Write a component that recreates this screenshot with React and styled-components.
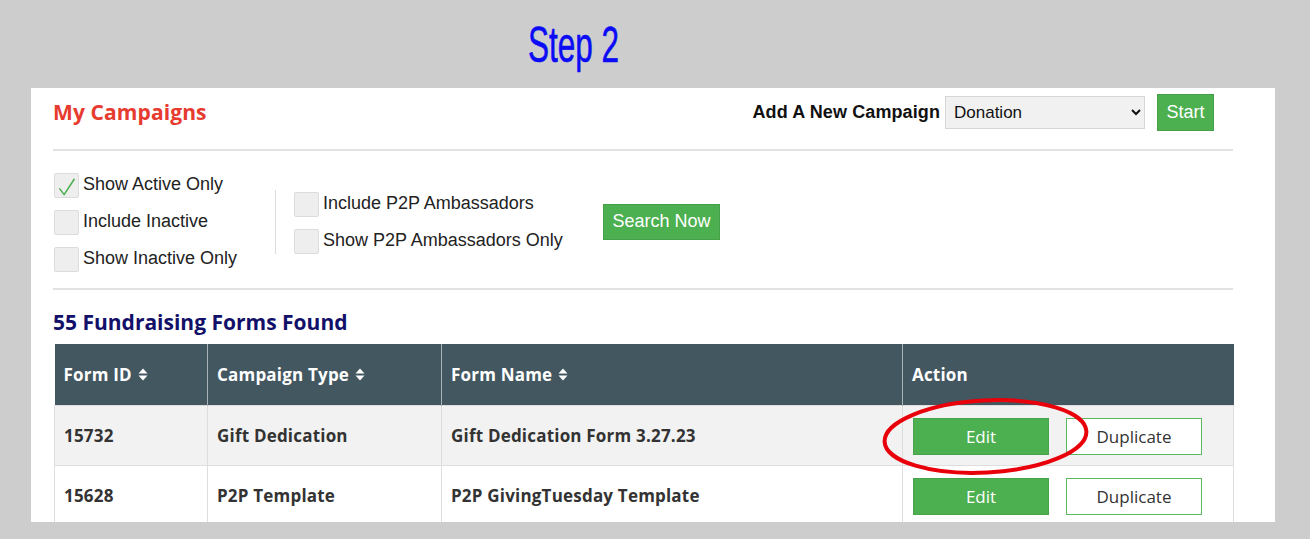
import React from "react";
import styled, { createGlobalStyle } from "styled-components";

const GlobalStyle = createGlobalStyle`
  html, body {
    margin: 0;
    padding: 0;
    background: #cdcdcd;
  }
  body {
    font-family: "Liberation Sans", Arial, sans-serif;
  }
`;

const forms = [
  { id: "15732", type: "Gift Dedication", name: "Gift Dedication Form 3.27.23", circled: true },
  { id: "15628", type: "P2P Template", name: "P2P GivingTuesday Template" },
];

const SortIcon = () => (
  <svg width="10" height="13" viewBox="0 0 10 13" style={{ marginLeft: 6 }}>
    <path d="M5 0.5 L9.5 5.5 H0.5 Z" fill="#fff" />
    <path d="M5 12.5 L9.5 7.5 H0.5 Z" fill="#fff" />
  </svg>
);

const Check = () => (
  <svg width="24" height="24" viewBox="0 0 24 24">
    <path
      d="M5 15 L9.5 21 L20 5"
      fill="none"
      stroke="#4caf50"
      strokeWidth="1.6"
      strokeLinecap="round"
      strokeLinejoin="round"
    />
  </svg>
);

const Filter = ({ label, checked }) => (
  <FilterRow>
    <Box>{checked && <Check />}</Box>
    <span>{label}</span>
  </FilterRow>
);

const App = () => {
  return (
    <>
      <GlobalStyle />
      <Page>
        <StepBar>
          <StepTitle>Step 2</StepTitle>
        </StepBar>
        <Panel>
          <TopBar>
            <PageTitle>My Campaigns</PageTitle>
            <NewCampaign>
              <NewLabel>Add A New Campaign</NewLabel>
              <TypeSelect defaultValue="Donation">
                <option>Donation</option>
                <option>Event</option>
                <option>P2P</option>
              </TypeSelect>
              <GreenButton $w={57} $h={37}>Start</GreenButton>
            </NewCampaign>
          </TopBar>

          <Filters>
            <FilterColumn $gap={12} $w={221}>
              <Filter label="Show Active Only" checked />
              <Filter label="Include Inactive" />
              <Filter label="Show Inactive Only" />
            </FilterColumn>
            <Divider />
            <FilterColumn $gap={12} $w={309} style={{ marginLeft: 18 }}>
              <Filter label="Include P2P Ambassadors" />
              <Filter label="Show P2P Ambassadors Only" />
            </FilterColumn>
            <GreenButton $w={117} $h={36}>Search Now</GreenButton>
          </Filters>

          <Found>55 Fundraising Forms Found</Found>

          <Table>
            <colgroup>
              <col style={{ width: 153 }} />
              <col style={{ width: 234 }} />
              <col style={{ width: 461 }} />
              <col style={{ width: 331 }} />
            </colgroup>
            <thead>
              <tr>
                <Th>
                  Form ID
                  <SortIcon />
                </Th>
                <Th>
                  Campaign Type
                  <SortIcon />
                </Th>
                <Th>
                  Form Name
                  <SortIcon />
                </Th>
                <Th>Action</Th>
              </tr>
            </thead>
            <tbody>
              {forms.map((f, i) => (
                <Tr key={f.id} $odd={i % 2 === 0}>
                  <Td>{f.id}</Td>
                  <Td>{f.type}</Td>
                  <Td>{f.name}</Td>
                  <Td>
                    <Actions>
                      <EditButton>Edit</EditButton>
                      <DupButton>Duplicate</DupButton>
                      {f.circled && (
                        <Circle width="211" height="81" viewBox="0 0 211 81">
                          <ellipse
                            cx="105.5"
                            cy="40.5"
                            rx="101"
                            ry="36"
                            fill="none"
                            stroke="#e8000b"
                            strokeWidth="4"
                            transform="rotate(-3 105.5 40.5)"
                          />
                        </Circle>
                      )}
                    </Actions>
                  </Td>
                </Tr>
              ))}
            </tbody>
          </Table>
        </Panel>
      </Page>
    </>
  );
};

const Page = styled.div`
  width: 1310px;
  height: 539px;
  overflow: hidden;
  padding-left: 31px;
  box-sizing: border-box;
`;

const StepBar = styled.div`
  height: 88px;
  display: flex;
  align-items: center;
  padding-left: 497px;
  box-sizing: border-box;
`;

const StepTitle = styled.h1`
  margin: 0;
  color: #0b0bf5;
  font-family: "Liberation Sans", Arial, sans-serif;
  font-weight: 400;
  font-size: 50px;
  line-height: 50px;
  transform: scaleX(0.63);
  transform-origin: left center;
  padding-top: 2px;
  -webkit-text-stroke: 0.6px #0b0bf5;
`;

const Panel = styled.div`
  width: 1244px;
  height: 434px;
  background: #fff;
  overflow: hidden;
  padding: 0 42px 0 22px;
  box-sizing: border-box;
`;

const TopBar = styled.div`
  height: 63px;
  padding-bottom: 13px;
  box-sizing: border-box;
  display: flex;
  align-items: center;
  justify-content: space-between;
  border-bottom: 2px solid #e2e2e2;
`;

const PageTitle = styled.h2`
  margin: 0;
  color: #e63b2e;
  font-family: "Open Sans", sans-serif;
  font-weight: 700;
  font-size: 21px;
  letter-spacing: 0.1px;
`;

const NewCampaign = styled.div`
  display: flex;
  align-items: center;
  margin-right: 19px;
`;

const NewLabel = styled.span`
  font-weight: 700;
  font-size: 18px;
  color: #111;
  margin-right: 5px;
  letter-spacing: 0.1px;
`;

const TypeSelect = styled.select`
  width: 200px;
  height: 33px;
  background: #f1f1f1;
  border: 1px solid #d6d6d6;
  font-family: "Liberation Sans", Arial, sans-serif;
  font-size: 17px;
  color: #111;
  padding: 0 4px;
  margin-right: 12px;
`;

const GreenButton = styled.button`
  width: ${(p) => p.$w}px;
  height: ${(p) => p.$h}px;
  background: #4caf50;
  border: 1px solid #45a049;
  color: #fff;
  font-family: "Liberation Sans", Arial, sans-serif;
  font-size: 18px;
  padding: 0;
  cursor: pointer;
`;

const Filters = styled.div`
  height: 139px;
  box-sizing: border-box;
  display: flex;
  align-items: center;
  border-bottom: 2px solid #e2e2e2;
  padding-left: 1px;
  padding-top: 4px;
`;

const FilterColumn = styled.div`
  display: flex;
  flex-direction: column;
  gap: ${(p) => p.$gap}px;
  width: ${(p) => p.$w}px;
`;

const FilterRow = styled.label`
  display: flex;
  align-items: center;
  gap: 4px;
  font-size: 18px;
  color: #222;
  height: 25px;
`;

const Box = styled.span`
  width: 23px;
  height: 23px;
  background: #eeeeee;
  border: 1px solid #dcdcdc;
  border-radius: 2px;
  display: flex;
  align-items: center;
  justify-content: center;
  flex-shrink: 0;
  margin-top: 2px;
`;

const Divider = styled.div`
  width: 1px;
  height: 64px;
  background: #dcdcdc;
`;

const Found = styled.h3`
  margin: 19px 0 9px;
  line-height: 26px;
  color: #121068;
  font-family: "Open Sans", sans-serif;
  font-weight: 700;
  font-size: 21px;
  letter-spacing: 0px;
`;

const Table = styled.table`
  width: 1179px;
  margin-left: 1px;
  border-collapse: collapse;
  table-layout: fixed;
  font-family: "Open Sans", sans-serif;
  font-size: 17px;
  font-weight: 700;
  letter-spacing: 0.2px;
`;

const Th = styled.th`
  height: 61px;
  background: #435761;
  color: #fff;
  text-align: left;
  padding: 0 9px;
  border: 1px solid #a9b2b6;
  border-top: none;
  border-bottom: none;
  box-sizing: border-box;
  &:first-child {
    border-left: none;
  }
  &:last-child {
    border-right: none;
  }
`;

const Tr = styled.tr`
  background: ${(p) => (p.$odd ? "#f2f2f2" : "#fff")};
`;

const Td = styled.td`
  height: 60px;
  padding: 0 9px;
  box-sizing: border-box;
  color: #333;
  border: 1px solid #dedede;
`;

const Actions = styled.div`
  position: relative;
  display: flex;
  align-items: center;
  gap: 17px;
  padding-left: 1px;
  padding-top: 3px;
`;

const EditButton = styled.button`
  width: 136px;
  height: 37px;
  background: #4caf50;
  border: 1px solid #46a54a;
  color: #fff;
  font-family: "Open Sans", sans-serif;
  font-size: 17px;
  padding: 0;
`;

const DupButton = styled.button`
  width: 136px;
  height: 37px;
  background: #fff;
  border: 1px solid #5cb860;
  color: #333;
  font-family: "Open Sans", sans-serif;
  font-size: 17px;
  padding: 0;
`;

const Circle = styled.svg`
  position: absolute;
  left: -32px;
  top: -19px;
  pointer-events: none;
`;

export default App;
